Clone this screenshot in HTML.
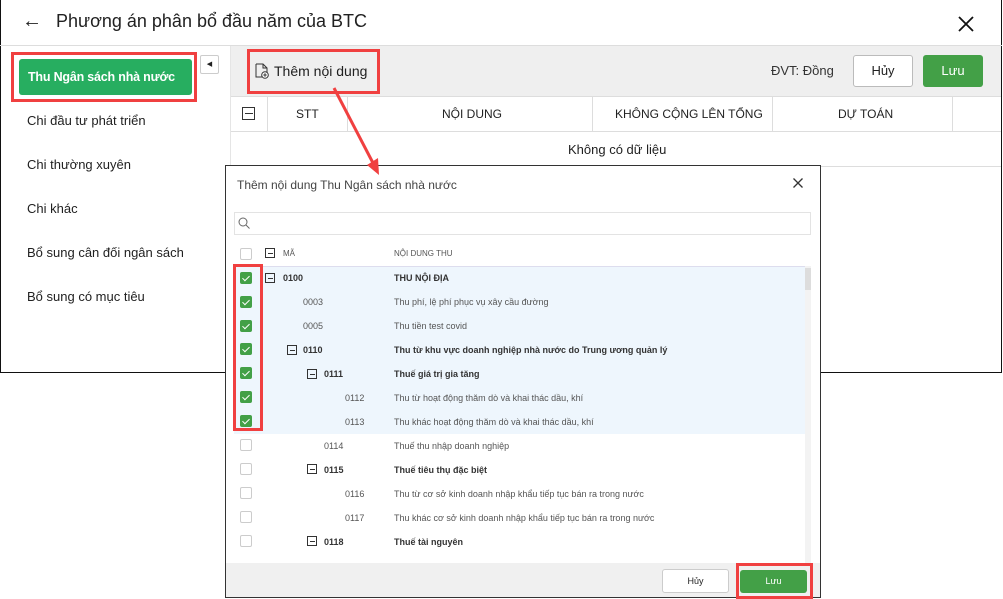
<!DOCTYPE html><html><head><meta charset="utf-8"><style>
*{box-sizing:border-box;margin:0;padding:0}
body{width:1003px;height:599px;background:#fff;font-family:"Liberation Sans",Arial,sans-serif;position:relative;overflow:hidden;color:#212121}
.a{position:absolute}
.main{left:0;top:0;width:1002px;height:373px;border:1px solid #111;border-top:none;background:#fff}
.cb{width:12px;height:12px;border:1px solid #ccc;border-radius:2px;background:#fff}
.cb.on{background:#43a047;border-color:#43a047}
.cb.on:after{content:"";position:absolute;left:3px;top:1px;width:3px;height:6px;border:solid #fff;border-width:0 1px 1px 0;transform:rotate(45deg)}
.mi{width:10px;height:10px;border:1px solid #333;}
.mi:after{content:"";position:absolute;left:1.5px;right:1.5px;top:50%;margin-top:-0.5px;height:1px;background:#333}
.r{font-size:9px;color:#555}
.b{font-weight:bold;color:#333}
</style></head><body>
<div class="a main"></div>
<div class="a" style="left:22px;top:10px;font-size:20px">←</div>
<div class="a" style="left:56px;top:11px;font-size:18px;color:#212121">Phương án phân bổ đầu năm của BTC</div>
<svg class="a" style="left:958px;top:16px" width="16" height="16"><path d="M1 1L15 15M15 1L1 15" stroke="#111" stroke-width="1.8"/></svg>
<div class="a" style="left:0;top:45px;width:1002px;height:1px;background:#ddd"></div>
<div class="a" style="left:230px;top:46px;width:771px;height:50px;background:#efefef"></div>
<div class="a" style="left:230px;top:46px;width:1px;height:326px;background:#e5e5e5"></div>
<div class="a" style="left:19px;top:59px;width:173px;height:36px;background:#27ae60;border-radius:3px;color:#fff;font-weight:bold;font-size:12.5px;line-height:36px;padding-left:9px;letter-spacing:-0.2px;white-space:nowrap">Thu Ngân sách nhà nước</div>
<div class="a" style="left:11px;top:52px;width:186px;height:50px;border:3px solid #f04040"></div>
<div class="a" style="left:200px;top:55px;width:19px;height:19px;border:1px solid #ccc;border-radius:2px;background:#fff;font-size:7px;text-align:center;line-height:17px">◀</div>
<div class="a" style="left:27px;top:113px;font-size:13px">Chi đầu tư phát triển</div>
<div class="a" style="left:27px;top:157px;font-size:13px">Chi thường xuyên</div>
<div class="a" style="left:27px;top:201px;font-size:13px">Chi khác</div>
<div class="a" style="left:27px;top:245px;font-size:13px">Bổ sung cân đối ngân sách</div>
<div class="a" style="left:27px;top:289px;font-size:13px">Bổ sung có mục tiêu</div>
<svg class="a" style="left:255px;top:63px" width="14" height="16"><path d="M1 1h7l4 4v5M1 1v13h6M8 1v4h4" fill="none" stroke="#333"/><circle cx="10" cy="12" r="3.3" fill="#fff" stroke="#333"/><path d="M10 10.3v3.4M8.3 12h3.4" stroke="#333"/></svg>
<div class="a" style="left:274px;top:63px;font-size:14px">Thêm nội dung</div>
<div class="a" style="left:247px;top:49px;width:133px;height:45px;border:3px solid #f04040"></div>
<div class="a" style="left:771px;top:63px;font-size:13px;color:#333">ĐVT: Đồng</div>
<div class="a" style="left:853px;top:55px;width:60px;height:32px;border:1px solid #bbb;border-radius:3px;background:#fff;text-align:center;line-height:30px;font-size:13px">Hủy</div>
<div class="a" style="left:923px;top:55px;width:60px;height:32px;background:#43a047;border-radius:3px;color:#fff;text-align:center;line-height:32px;font-size:13px">Lưu</div>
<div class="a" style="left:231px;top:96px;width:770px;height:1px;background:#ddd"></div>
<div class="a" style="left:231px;top:131px;width:770px;height:1px;background:#ddd"></div>
<div class="a" style="left:231px;top:166px;width:770px;height:1px;background:#ddd"></div>
<div class="a" style="left:267px;top:97px;width:1px;height:34px;background:#ddd"></div>
<div class="a" style="left:347px;top:97px;width:1px;height:34px;background:#ddd"></div>
<div class="a" style="left:592px;top:97px;width:1px;height:34px;background:#ddd"></div>
<div class="a" style="left:772px;top:97px;width:1px;height:34px;background:#ddd"></div>
<div class="a" style="left:952px;top:97px;width:1px;height:34px;background:#ddd"></div>
<div class="a mi" style="left:242px;top:107px;width:13px;height:13px"></div>
<div class="a" style="left:296px;top:107px;font-size:12px">STT</div>
<div class="a" style="left:442px;top:107px;font-size:12px">NỘI DUNG</div>
<div class="a" style="left:615px;top:107px;font-size:12px">KHÔNG CỘNG LÊN TỔNG</div>
<div class="a" style="left:838px;top:107px;font-size:12px">DỰ TOÁN</div>
<div class="a" style="left:568px;top:142px;font-size:13px">Không có dữ liệu</div>
<!-- dialog -->
<div class="a" style="left:225px;top:165px;width:596px;height:433px;background:#fff;border:1px solid #333"></div>
<svg class="a" style="left:330px;top:85px" width="60" height="95"><path d="M4 3L43 78" stroke="#f04040" stroke-width="3"/><path d="M37 80L49 90L48 73Z" fill="#f04040"/></svg>
<div class="a" style="left:237px;top:178px;font-size:12px;color:#444">Thêm nội dung Thu Ngân sách nhà nước</div>
<svg class="a" style="left:793px;top:178px" width="10" height="10"><path d="M0.5 0.5L9.5 9.5M9.5 0.5L0.5 9.5" stroke="#333" stroke-width="1.3"/></svg>
<div class="a" style="left:234px;top:212px;width:577px;height:23px;border:1px solid #e3e3e3"></div>
<svg class="a" style="left:238px;top:217px" width="12" height="12"><circle cx="5" cy="5" r="4" fill="none" stroke="#666"/><path d="M8 8l3.5 3.5" stroke="#666"/></svg>
<div class="a cb" style="left:240px;top:248px"></div>
<div class="a mi" style="left:265px;top:248px"></div>
<div class="a" style="left:283px;top:249px;font-size:8px;color:#555">MÃ</div>
<div class="a" style="left:394px;top:249px;font-size:8px;color:#555">NỘI DUNG THU</div>
<div class="a" style="left:234px;top:266px;width:571px;height:168px;background:#eef6fd"></div>
<div class="a" style="left:234px;top:266px;width:571px;height:1px;background:#dde"></div>
<div class="a" style="left:805px;top:266px;width:6px;height:297px;background:#f3f3f3"></div>
<div class="a" style="left:805px;top:268px;width:6px;height:22px;background:#ddd"></div>
<div class="a cb on" style="left:240px;top:272px"></div><div class="a mi" style="left:265px;top:273px"></div><div class="a r b" style="left:283px;top:273px">0100</div><div class="a r b" style="left:394px;top:273px">THU NỘI ĐỊA</div>
<div class="a cb on" style="left:240px;top:296px"></div><div class="a r" style="left:303px;top:297px">0003</div><div class="a r" style="left:394px;top:297px">Thu phí, lệ phí phục vụ xây cầu đường</div>
<div class="a cb on" style="left:240px;top:320px"></div><div class="a r" style="left:303px;top:321px">0005</div><div class="a r" style="left:394px;top:321px">Thu tiền test covid</div>
<div class="a cb on" style="left:240px;top:343px"></div><div class="a mi" style="left:287px;top:345px"></div><div class="a r b" style="left:303px;top:345px">0110</div><div class="a r b" style="left:394px;top:345px">Thu từ khu vực doanh nghiệp nhà nước do Trung ương quản lý</div>
<div class="a cb on" style="left:240px;top:367px"></div><div class="a mi" style="left:307px;top:369px"></div><div class="a r b" style="left:324px;top:369px">0111</div><div class="a r b" style="left:394px;top:369px">Thuế giá trị gia tăng</div>
<div class="a cb on" style="left:240px;top:391px"></div><div class="a r" style="left:345px;top:393px">0112</div><div class="a r" style="left:394px;top:393px">Thu từ hoạt động thăm dò và khai thác dầu, khí</div>
<div class="a cb on" style="left:240px;top:415px"></div><div class="a r" style="left:345px;top:417px">0113</div><div class="a r" style="left:394px;top:417px">Thu khác hoạt động thăm dò và khai thác dầu, khí</div>
<div class="a cb" style="left:240px;top:439px"></div><div class="a r" style="left:324px;top:441px">0114</div><div class="a r" style="left:394px;top:441px">Thuế thu nhập doanh nghiệp</div>
<div class="a cb" style="left:240px;top:463px"></div><div class="a mi" style="left:307px;top:464px"></div><div class="a r b" style="left:324px;top:465px">0115</div><div class="a r b" style="left:394px;top:465px">Thuế tiêu thụ đặc biệt</div>
<div class="a cb" style="left:240px;top:487px"></div><div class="a r" style="left:345px;top:489px">0116</div><div class="a r" style="left:394px;top:489px">Thu từ cơ sở kinh doanh nhập khẩu tiếp tục bán ra trong nước</div>
<div class="a cb" style="left:240px;top:511px"></div><div class="a r" style="left:345px;top:513px">0117</div><div class="a r" style="left:394px;top:513px">Thu khác cơ sở kinh doanh nhập khẩu tiếp tục bán ra trong nước</div>
<div class="a cb" style="left:240px;top:535px"></div><div class="a mi" style="left:307px;top:536px"></div><div class="a r b" style="left:324px;top:537px">0118</div><div class="a r b" style="left:394px;top:537px">Thuế tài nguyên</div>
<div class="a" style="left:233px;top:264px;width:30px;height:167px;border:3px solid #f04040"></div>
<div class="a" style="left:226px;top:563px;width:594px;height:34px;background:#f0f0f0"></div>
<div class="a" style="left:662px;top:569px;width:67px;height:24px;border:1px solid #ccc;border-radius:3px;background:#fff;text-align:center;line-height:22px;font-size:9px">Hủy</div>
<div class="a" style="left:740px;top:570px;width:67px;height:23px;border-radius:3px;background:#43a047;color:#fff;text-align:center;line-height:23px;font-size:9px">Lưu</div>
<div class="a" style="left:736px;top:563px;width:77px;height:36px;border:3px solid #f04040"></div>
</body></html>
